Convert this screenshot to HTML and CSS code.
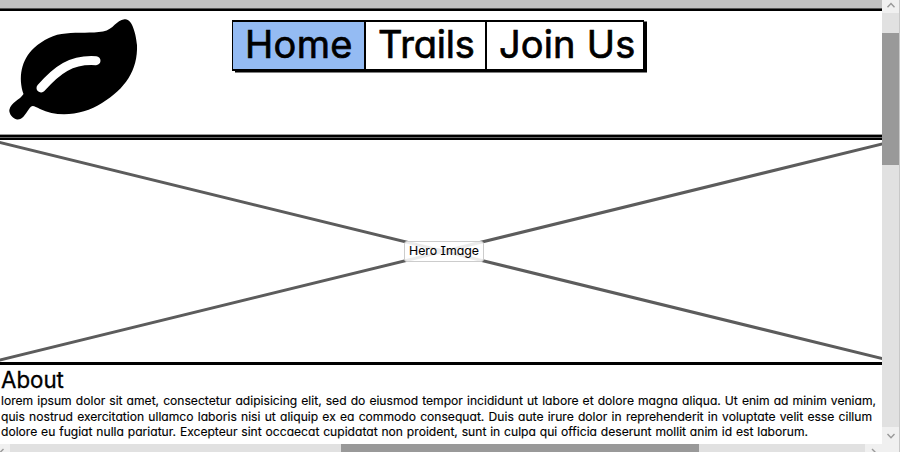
FILE: index.html
```html
<!DOCTYPE html>
<html lang="en">
<head>
<meta charset="utf-8">
<title>Trails</title>
<link rel="stylesheet" href="styles.css">
</head>
<body>
<div class="window">
  <main class="page">
    <div class="topbar"></div>
    <header class="header">
      <svg class="logo" width="150" height="123" viewBox="0 11 150 123">
        <path d="M23.500 94C18 78 21 60 34 48C43 40 54 34 66 33.500C78 32 92 33.500 103 31.500C114 29.500 116 20 124.500 19.300C132 18 136 34 137 45C138 70 125 89 102 103C84 115 58 118 40 109C34 106 32 104 29 109C25 115 22 120 17 119.500C13 119 9 114 9.300 110C11 102 20 100 23.500 94Z"/>
        <path class="vein" d="M41 88C57 70 71 59 96 60.700"/>
      </svg>
      <nav class="nav">
        <a class="tab active"><span class="home">Home</span></a>
        <a class="tab"><span class="trails">Trails</span></a>
        <a class="tab"><span class="join">Join Us</span></a>
      </nav>
    </header>
    <section class="hero">
      <svg class="cross" width="882" height="222" viewBox="0 140 882 222">
        <path d="M-2 142L884 359M-2 360.500L884 143.500"/>
      </svg>
      <span class="caption"><span>Hero Image</span></span>
    </section>
    <section class="about">
      <h1>About</h1>
      <p class="line one">lorem ipsum dolor sit amet, consectetur adipisicing elit, sed do eiusmod tempor incididunt ut labore et dolore magna aliqua. Ut enim ad minim veniam,</p>
      <p class="line two">quis nostrud exercitation ullamco laboris nisi ut aliquip ex ea commodo consequat. Duis aute irure dolor in reprehenderit in voluptate velit esse cillum</p>
      <p class="line three">dolore eu fugiat nulla pariatur. Excepteur sint occaecat cupidatat non proident, sunt in culpa qui officia deserunt mollit anim id est laborum.</p>
    </section>
  </main>
  <div class="vscroll">
    <div class="button"><svg width="17" height="13" viewBox="0 0 17 13"><path d="M5.500 7.300L9 3.500L12.500 7.300"/></svg></div>
    <div class="vthumb"></div>
    <div class="button down"><svg width="17" height="17" viewBox="0 0 17 17"><path d="M5.500 7L9 10.800L12.500 7"/></svg></div>
  </div>
  <div class="hscroll">
    <div class="left"><svg width="10" height="8" viewBox="0 0 10 8"><path d="M3.500 5L0 8.500"/></svg></div>
    <div class="hthumb"></div>
    <div class="right"><svg width="17" height="8" viewBox="0 0 17 8"><path d="M7 5L10.500 8.500"/></svg></div>
  </div>
</div>
</body>
</html>
```
FILE: styles.css
```css
* { box-sizing: border-box; }
body {
  margin: 0;
  overflow: hidden;
  background: #fff;
  color: #000;
  font-family: Inter, "Liberation Sans", sans-serif;
  font-feature-settings: "cv11", "cv08";
}
svg { display: block; }
.window {
  display: grid;
  grid-template-columns: 882px 18px;
  grid-template-rows: 444px 8px;
  width: 900px;
  height: 452px;
}
.page { overflow: hidden; }
.topbar {
  height: 11px;
  background: linear-gradient(#c1c1c1 8px, #555 8px, #555 9px, #000 9px);
}
.header {
  display: flex;
  height: 129px;
  border-bottom: 6px solid transparent;
  background: linear-gradient(#fff 123px, #999 123px, #999 124px, #000 124px, #000 126px, #666 126px, #666 127px, #000 127px) border-box;
}
.vein {
  fill: none;
  stroke: #fff;
  stroke-width: 9;
  stroke-linecap: round;
}
.nav {
  display: grid;
  grid-template-columns: 133px 121px 156px;
  width: 412px;
  height: 51px;
  margin: 9px 0 0 82px;
  border: 2px solid #000;
  border-left-width: 1px;
  border-right-width: 1px;
  box-shadow: 3px 1.5px 0 #000;
}
.tab {
  padding-left: 12px;
  border-right: 2px solid #000;
  font-size: 38px;
  line-height: 45px;
  white-space: nowrap;
  -webkit-text-stroke: 0.7px #000;
  stroke-linejoin: round;
}
.tab:last-child { border-right: 0; }
.active { background: #94bbf3; }
.home { letter-spacing: 0.3px; }
.trails { letter-spacing: -0.2px; }
.join { letter-spacing: 0.1px; word-spacing: 0.5px; }
.hero {
  display: grid;
  place-items: center;
  height: 225px;
  border-bottom: 3px solid #000;
}
.cross, .caption { grid-area: 1 / 1; }
.cross path { fill: none; stroke: #5c5c5c; stroke-width: 3; }
.caption {
  width: 80px;
  height: 21px;
  margin-left: 6px;
  padding-left: 4px;
  border: 1px solid #ccc;
  border-radius: 3px;
  background: rgba(255, 255, 255, 0.88);
  font-size: 12.3px;
  line-height: 18px;
  white-space: nowrap;
  -webkit-text-stroke: 0.1px #000;
}
.about { padding: 1px 0 0 1px; }
h1 {
  margin: 0;
  font-size: 22.3px;
  font-weight: 400;
  line-height: 27px;
  -webkit-text-stroke: 0.3px #000;
}
.line {
  height: 15.7px;
  margin: 0;
  font-size: 12.1px;
  line-height: 15px;
  white-space: nowrap;
  text-align-last: justify;
  -webkit-text-stroke: 0.15px #000;
}
.one { width: 875px; }
.two { width: 871px; }
.three { width: 807px; }
.vscroll {
  display: flex;
  flex-direction: column;
  border-right: 1px solid #c8c8c8;
  background: #e1e1e1;
}
.button { height: 13px; background: #f0f0f0; }
.vthumb { height: 132px; margin-top: 20px; background: #999; }
.down { height: 17px; margin-top: auto; }
.vscroll path, .hscroll path { fill: none; stroke: #999; stroke-width: 1.4; }
.hscroll {
  display: flex;
  grid-column: 1 / 3;
  border-right: 1px solid #c8c8c8;
  background: #e1e1e1;
}
.left { width: 10px; background: #f0f0f0; }
.hthumb { width: 358px; margin-left: 331px; background: #999; }
.right { width: 34px; margin-left: auto; background: #f0f0f0; }
```
